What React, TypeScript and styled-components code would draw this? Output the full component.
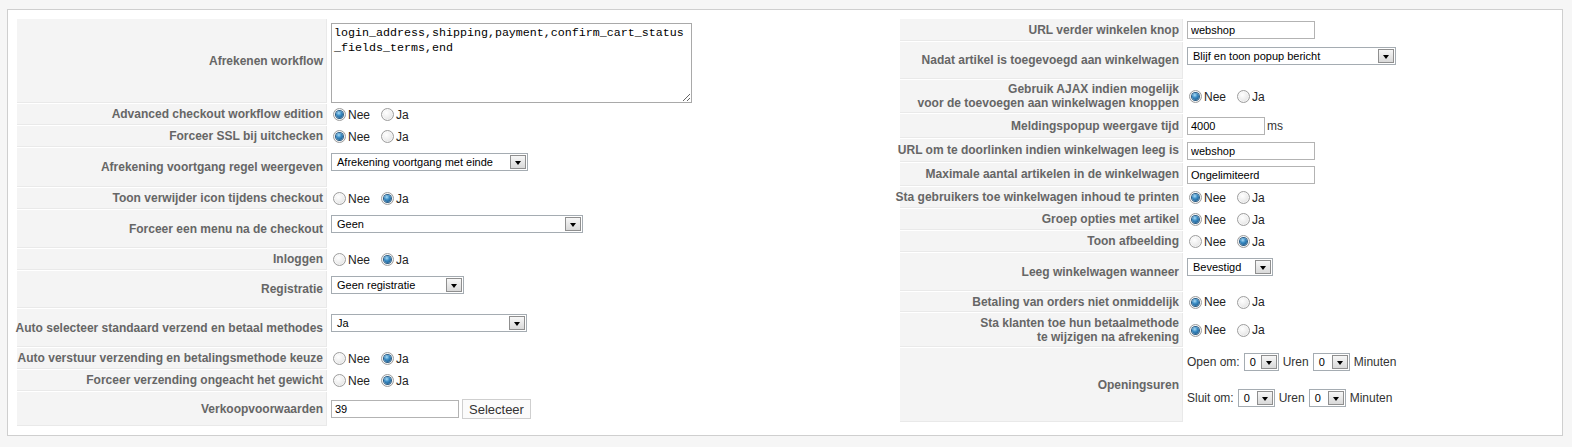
import React from "react";
import styled, { createGlobalStyle } from "styled-components";

const GlobalStyle = createGlobalStyle`
  html, body {
    margin: 0;
    padding: 0;
    background: #f6f6f6;
  }
  body {
    font-family: "Liberation Sans", Arial, sans-serif;
    font-size: 12px;
    color: #333;
  }
`;

type Field =
  | { kind: "textarea"; value: string }
  | { kind: "radio"; yes: boolean }
  | { kind: "select"; value: string; width: number }
  | { kind: "input"; value: string; width: number; suffix?: string; button?: string }
  | { kind: "hours" };

interface RowData {
  label: string[];
  height: number;
  field: Field;
}

const leftRows: RowData[] = [
  {
    label: ["Afrekenen workflow"],
    height: 84,
    field: {
      kind: "textarea",
      value: "login_address,shipping,payment,confirm_cart_status_fields_terms,end",
    },
  },
  { label: ["Advanced checkout workflow edition"], height: 21, field: { kind: "radio", yes: false } },
  { label: ["Forceer SSL bij uitchecken"], height: 21, field: { kind: "radio", yes: false } },
  {
    label: ["Afrekening voortgang regel weergeven"],
    height: 39,
    field: { kind: "select", value: "Afrekening voortgang met einde", width: 197 },
  },
  { label: ["Toon verwijder icon tijdens checkout"], height: 21, field: { kind: "radio", yes: true } },
  {
    label: ["Forceer een menu na de checkout"],
    height: 38,
    field: { kind: "select", value: "Geen", width: 252 },
  },
  { label: ["Inloggen"], height: 21, field: { kind: "radio", yes: true } },
  {
    label: ["Registratie"],
    height: 37,
    field: { kind: "select", value: "Geen registratie", width: 133 },
  },
  {
    label: ["Auto selecteer standaard verzend en betaal methodes"],
    height: 38,
    field: { kind: "select", value: "Ja", width: 196 },
  },
  { label: ["Auto verstuur verzending en betalingsmethode keuze"], height: 21, field: { kind: "radio", yes: true } },
  { label: ["Forceer verzending ongeacht het gewicht"], height: 21, field: { kind: "radio", yes: true } },
  {
    label: ["Verkoopvoorwaarden"],
    height: 34,
    field: { kind: "input", value: "39", width: 128, button: "Selecteer" },
  },
];

const rightRows: RowData[] = [
  { label: ["URL verder winkelen knop"], height: 22, field: { kind: "input", value: "webshop", width: 128 } },
  {
    label: ["Nadat artikel is toegevoegd aan winkelwagen"],
    height: 37,
    field: { kind: "select", value: "Blijf en toon popup bericht", width: 209 },
  },
  {
    label: ["Gebruik AJAX indien mogelijk", "voor de toevoegen aan winkelwagen knoppen"],
    height: 33,
    field: { kind: "radio", yes: false },
  },
  {
    label: ["Meldingspopup weergave tijd"],
    height: 24,
    field: { kind: "input", value: "4000", width: 78, suffix: "ms" },
  },
  {
    label: ["URL om te doorlinken indien winkelwagen leeg is"],
    height: 23,
    field: { kind: "input", value: "webshop", width: 128 },
  },
  {
    label: ["Maximale aantal artikelen in de winkelwagen"],
    height: 23,
    field: { kind: "input", value: "Ongelimiteerd", width: 128 },
  },
  { label: ["Sta gebruikers toe winkelwagen inhoud te printen"], height: 21, field: { kind: "radio", yes: false } },
  { label: ["Groep opties met artikel"], height: 21, field: { kind: "radio", yes: false } },
  { label: ["Toon afbeelding"], height: 21, field: { kind: "radio", yes: true } },
  {
    label: ["Leeg winkelwagen wanneer"],
    height: 38,
    field: { kind: "select", value: "Bevestigd", width: 86 },
  },
  { label: ["Betaling van orders niet onmiddelijk"], height: 20, field: { kind: "radio", yes: false } },
  {
    label: ["Sta klanten toe hun betaalmethode", "te wijzigen na afrekening"],
    height: 34,
    field: { kind: "radio", yes: false },
  },
  { label: ["Openingsuren"], height: 74, field: { kind: "hours" } },
];

const Panel = styled.div`
  box-sizing: border-box;
  width: 1556px;
  margin: 9px 0 0 7px;
  padding: 9px 9px 9px;
  background: #fff;
  border: 1px solid #cfcfcf;
  display: grid;
  grid-template-columns: 873px 1fr;
  column-gap: 10px;
  align-items: start;
`;

const FormTable = styled.div`
  display: flex;
  flex-direction: column;
  gap: 1px;
`;

const Row = styled.div<{ $h: number; $labelW: number }>`
  display: grid;
  grid-template-columns: ${({ $labelW }) => $labelW}px 1fr;
  column-gap: 1px;
  height: ${({ $h }) => $h}px;
`;

const Label = styled.div`
  box-sizing: border-box;
  display: flex;
  flex-direction: column;
  justify-content: center;
  align-items: flex-end;
  text-align: right;
  padding-right: 3px;
  background: #f4f4f4;
  border-bottom: 1px solid #e9e9e9;
  border-right: 1px solid #e9e9e9;
  color: #666;
  font-weight: bold;
  font-size: 12px;
  line-height: 14px;
  white-space: nowrap;
`;

const Value = styled.div<{ $top?: boolean }>`
  display: flex;
  align-items: ${({ $top }) => ($top ? "flex-start" : "center")};
  padding: ${({ $top }) => ($top ? "5px 0 0 3px" : "0 0 0 3px")};
  min-width: 0;
`;

const TextArea = styled.textarea`
  box-sizing: border-box;
  width: 361px;
  height: 80px;
  margin: -1px 0 0 0;
  padding: 2px;
  border: 1px solid #a9a9a9;
  font-family: "Liberation Mono", "Courier New", monospace;
  font-size: 11.67px;
  line-height: 15px;
  color: #000;
  word-break: break-all;
  overflow: auto;
  outline: none;
  background: #fff;
`;

const RadioGroup = styled.div`
  display: flex;
  align-items: center;
  gap: 11px;
  padding-left: 2px;
`;

const RadioOption = styled.label`
  display: flex;
  align-items: center;
  gap: 2px;
  font-size: 12px;
  color: #222;
  line-height: 14px;
`;

const RadioDot = styled.span<{ $checked: boolean }>`
  box-sizing: border-box;
  display: inline-flex;
  align-items: center;
  justify-content: center;
  width: 13px;
  height: 13px;
  border-radius: 50%;
  border: 1px solid #9d9d9d;
  background: radial-gradient(circle at 40% 35%, #ffffff 0%, #ececec 55%, #cfcfcf 100%);
  box-shadow: inset 0 0 0 1px rgba(255, 255, 255, 0.6);

  &::after {
    content: "";
    display: ${({ $checked }) => ($checked ? "block" : "none")};
    width: 7px;
    height: 7px;
    border-radius: 50%;
    background: radial-gradient(circle at 40% 30%, #a9dcf7 0%, #3b8cc4 40%, #0f4a7c 100%);
    box-shadow: 0 0 0 1px #2a5d86;
  }
`;

const SelectBox = styled.div<{ $w: number }>`
  box-sizing: border-box;
  display: flex;
  align-items: center;
  justify-content: space-between;
  width: ${({ $w }) => $w}px;
  height: 18px;
  padding: 0 1px 0 5px;
  border: 1px solid #a5acb2;
  background: #fff;
  font-size: 11px;
  color: #000;
  white-space: nowrap;
`;

const SelectArrow = styled.span`
  box-sizing: border-box;
  display: flex;
  align-items: center;
  justify-content: center;
  width: 16px;
  height: 14px;
  margin-left: 4px;
  border: 1px solid #8f8f8f;
  background: linear-gradient(#f7f7f7, #d9d9d9);
  flex-shrink: 0;

  &::after {
    content: "";
    margin-top: 2px;
    border-left: 3.5px solid transparent;
    border-right: 3.5px solid transparent;
    border-top: 4px solid #000;
  }
`;

const TextInput = styled.input<{ $w: number }>`
  box-sizing: border-box;
  width: ${({ $w }) => $w}px;
  height: 18px;
  margin: 0;
  padding: 0 3px;
  border: 1px solid #b3b3b3;
  font-family: "Liberation Sans", Arial, sans-serif;
  font-size: 11px;
  color: #000;
  background: #fff;
  outline: none;
`;

const Suffix = styled.span`
  margin-left: 2px;
  font-size: 12px;
  color: #333;
`;

const Button = styled.button`
  box-sizing: border-box;
  height: 20px;
  margin-left: 3px;
  padding: 0 6px;
  border: 1px solid #cfcfcf;
  background: #fbfbfb;
  font-family: "Liberation Sans", Arial, sans-serif;
  font-size: 13px;
  color: #333;
`;

const Hours = styled.div`
  display: flex;
  flex-direction: column;
  gap: 18px;
`;

const HourLine = styled.div`
  display: flex;
  align-items: center;
  gap: 4px;
  height: 18px;
  font-size: 12px;
  color: #333;
  white-space: nowrap;
`;

const Select = ({ value, width }: { value: string; width: number }) => (
  <SelectBox $w={width}>
    <span>{value}</span>
    <SelectArrow />
  </SelectBox>
);

const Radios = ({ yes }: { yes: boolean }) => (
  <RadioGroup>
    <RadioOption>
      <RadioDot $checked={!yes} />
      Nee
    </RadioOption>
    <RadioOption>
      <RadioDot $checked={yes} />
      Ja
    </RadioOption>
  </RadioGroup>
);

const renderField = (field: Field) => {
  switch (field.kind) {
    case "textarea":
      return <TextArea readOnly defaultValue={field.value} spellCheck={false} />;
    case "radio":
      return <Radios yes={field.yes} />;
    case "select":
      return <Select value={field.value} width={field.width} />;
    case "input":
      return (
        <>
          <TextInput readOnly $w={field.width} defaultValue={field.value} />
          {field.suffix && <Suffix>{field.suffix}</Suffix>}
          {field.button && <Button type="button">{field.button}</Button>}
        </>
      );
    case "hours":
      return (
        <Hours>
          <HourLine>
            Open om:
            <Select value="0" width={35} />
            Uren
            <Select value="0" width={37} />
            Minuten
          </HourLine>
          <HourLine>
            Sluit om:
            <Select value="0" width={37} />
            Uren
            <Select value="0" width={37} />
            Minuten
          </HourLine>
        </Hours>
      );
  }
};

const isTop = (field: Field) =>
  field.kind === "select" || field.kind === "textarea" || field.kind === "hours";

const SettingsTable = ({ rows, labelWidth }: { rows: RowData[]; labelWidth: number }) => (
  <FormTable>
    {rows.map((row) => (
      <Row key={row.label.join(" ")} $h={row.height} $labelW={labelWidth}>
        <Label>
          {row.label.map((line) => (
            <span key={line}>{line}</span>
          ))}
        </Label>
        <Value $top={isTop(row.field)}>{renderField(row.field)}</Value>
      </Row>
    ))}
  </FormTable>
);

const App = () => (
  <>
    <GlobalStyle />
    <Panel>
      <SettingsTable rows={leftRows} labelWidth={310} />
      <SettingsTable rows={rightRows} labelWidth={283} />
    </Panel>
  </>
);

export default App;
